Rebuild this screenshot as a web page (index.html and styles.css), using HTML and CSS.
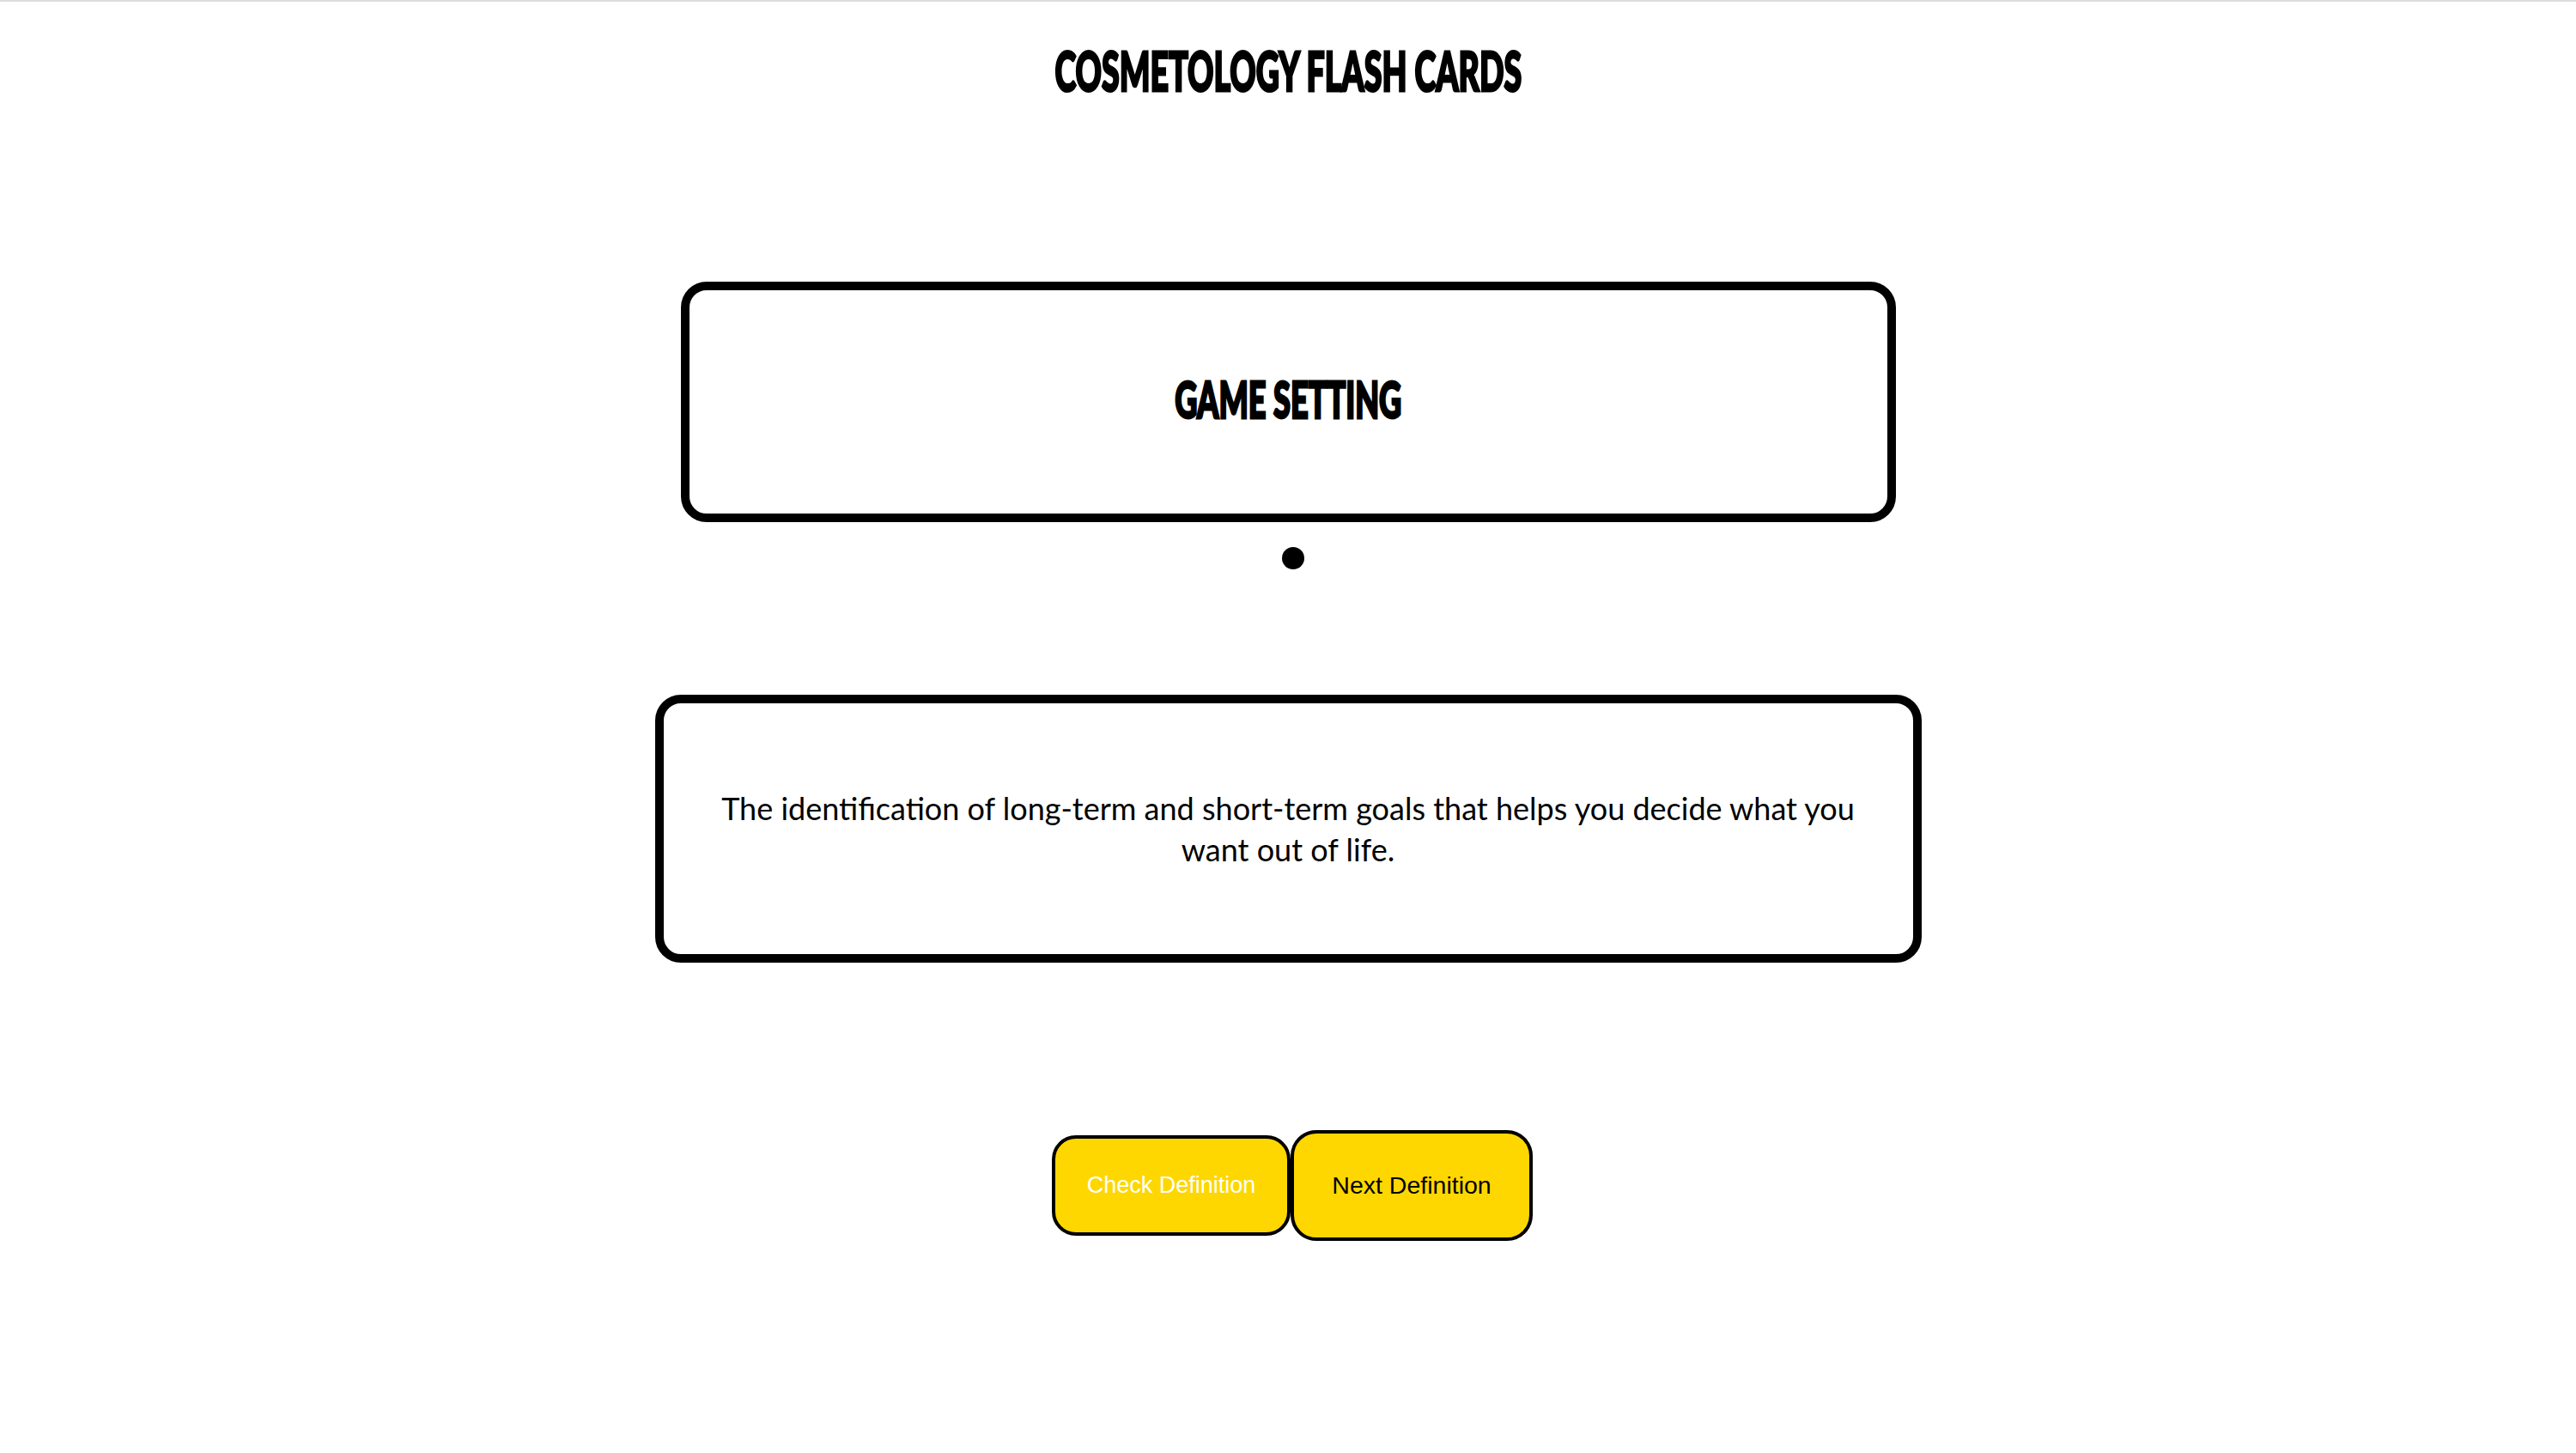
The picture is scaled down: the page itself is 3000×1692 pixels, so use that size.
FILE: index.html
```html
<!DOCTYPE html>
<html lang="en">
<head>
<meta charset="utf-8">
<title>Cosmetology Flash Cards</title>
<link rel="stylesheet" href="styles.css">
</head>
<body>
<div class="topline"></div>
<main class="page">
  <h1 class="title"><span class="title-text">COSMETOLOGY FLASH CARDS</span></h1>
  <section class="card card-term">
    <h2 class="term"><span class="term-text">GAME SETTING</span></h2>
  </section>
  <div class="dot"></div>
  <section class="card card-def">
    <p class="definition">The identification of long-term and short-term goals that helps you decide what you<br>want out of life.</p>
  </section>
  <div class="actions">
    <button class="btn btn-check" type="button">Check Definition</button>
    <button class="btn btn-next" type="button">Next Definition</button>
  </div>
</main>
</body>
</html>
```
FILE: styles.css
```css
html, body {
  margin: 0;
  padding: 0;
  background: #ffffff;
}

.topline {
  height: 2px;
  background: #dcdcdc;
}

.page {
  display: flex;
  flex-direction: column;
  align-items: center;
}

.title {
  margin: 48px 0 0;
  height: 64px;
  font-family: Lato, "Liberation Sans", sans-serif;
  font-weight: 900;
  font-size: 63.5px;
  line-height: 64px;
  color: #000;
  text-align: center;
  white-space: nowrap;
}

.title-text {
  display: inline-block;
  -webkit-text-stroke: 3px #000;
  transform: scaleX(0.592);
}

.card {
  box-sizing: border-box;
  border: 10px solid #000;
  border-radius: 30px;
  background: #fff;
  display: flex;
  align-items: center;
  justify-content: center;
}

.card-term {
  margin-top: 214px;
  width: 1415px;
  height: 280px;
}

.term {
  margin: 0 0 8px;
  font-family: Lato, "Liberation Sans", sans-serif;
  font-weight: 900;
  font-size: 58.6px;
  line-height: 60px;
  white-space: nowrap;
}

.term-text {
  display: inline-block;
  -webkit-text-stroke: 3px #000;
  transform: scaleX(0.616);
}

.dot {
  margin-top: 29px;
  margin-left: 12px;
  width: 26px;
  height: 26px;
  border-radius: 50%;
  background: #000;
}

.card-def {
  margin-top: 146px;
  width: 1475px;
  height: 312px;
}

.definition {
  margin: 0;
  font-family: Lato, "Noto Sans", sans-serif;
  font-size: 36px;
  line-height: 48px;
  text-align: center;
  color: #000;
}

.actions {
  margin-top: 195px;
  margin-left: 10px;
  display: flex;
  align-items: center;
}

.btn {
  box-sizing: border-box;
  display: flex;
  align-items: center;
  justify-content: center;
  border: 4px solid #000;
  background: #ffd700;
  font-family: "Liberation Sans", Arial, sans-serif;
  font-size: 27px;
  padding: 0;
  margin: 0;
}

.btn-check {
  width: 278px;
  height: 117px;
  border-radius: 28px;
  color: #fff;
}

.btn-next {
  width: 282px;
  height: 129px;
  border-radius: 30px;
  font-size: 28.5px;
  color: #000;
}
```
